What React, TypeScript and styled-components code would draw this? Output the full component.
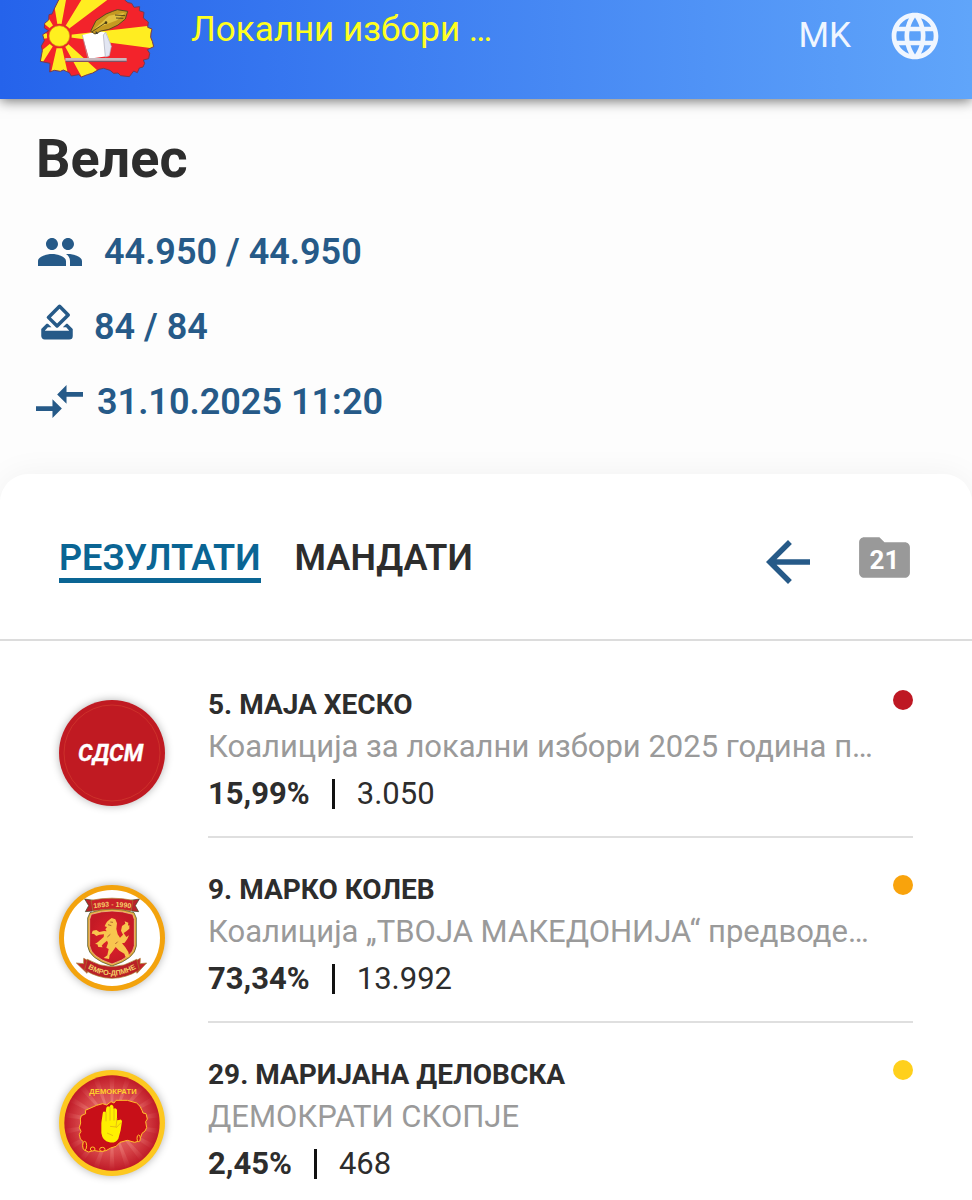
import React from "react";
import styled, { createGlobalStyle } from "styled-components";
import { MdArrowBack, MdFolder, MdHowToVote, MdLanguage, MdPeople } from "react-icons/md";

const GlobalStyle = createGlobalStyle`
  * { box-sizing: border-box; }
  body {
    margin: 0;
    background: #fdfdfd;
    color: #2d2d2d;
    font-family: Roboto, "Noto Sans", sans-serif;
  }
  h1, h2, p, ul { margin: 0; padding: 0; }
  button { border: 0; padding: 0; background: none; color: inherit; font: inherit; cursor: pointer; }
  svg { display: block; flex: none; }
`;

const Header = styled.header`
  position: relative;
  display: flex;
  align-items: flex-start;
  height: 99px;
  padding: 0 29px 0 38px;
  background: linear-gradient(90deg, #2563eb, #60a5fa);
  box-shadow: 0 2px 12px rgba(0, 0, 0, 0.55);
`;

const AppTitle = styled.p`
  flex: 1;
  padding: 10px 0 0 35px;
  color: #ffff1f;
  font-size: 35px;
  line-height: 40px;
`;

const Language = styled.button`
  display: flex;
  align-items: center;
  gap: 36px;
  padding-top: 8px;
  color: #f0f6ff;
  font-size: 35px;
  line-height: 56px;
`;

const Summary = styled.section`
  padding: 28px 36px 35px;
`;

const Place = styled.h1`
  font-size: 54px;
  font-weight: 700;
  line-height: 64px;
  margin-bottom: 23px;
`;

const Stat = styled.p<{ $gap: number }>`
  display: flex;
  align-items: center;
  gap: ${(p) => p.$gap}px;
  height: 75px;
  color: #265a88;
  font-size: 36px;
  font-weight: 600;
`;

const BallotIcon = styled(MdHowToVote)`
  margin-bottom: 10px;
`;

const Card = styled.main`
  background: #fff;
  border-radius: 28px 28px 0 0;
  box-shadow: 0 0 32px rgba(0, 0, 0, 0.05);
`;

const Toolbar = styled.div`
  display: flex;
  align-items: center;
  gap: 34px;
  height: 167px;
  padding: 0 57px 0 59px;
  border-bottom: 2px solid #dcdcdc;
`;

const Tab = styled.button<{ $active?: boolean }>`
  padding-top: 8px;
  border-bottom: 5px solid ${(p) => (p.$active ? "#0a6594" : "transparent")};
  color: ${(p) => (p.$active ? "#0a6594" : "#2d2d2d")};
  font-size: 36px;
  font-weight: 600;
  line-height: 40px;
`;

const Actions = styled.div`
  display: flex;
  align-items: flex-start;
  gap: 33px;
  margin-left: auto;
  padding-top: 10px;
  color: #265a88;
`;

const FolderButton = styled.button`
  display: grid;
  place-items: center;
  margin-top: -2px;
  color: #999;
  font-size: 26px;
  font-weight: 700;
  > * { grid-area: 1 / 1; }
  span { color: #fff; padding-top: 6px; }
`;

const List = styled.ul`
  list-style: none;
  padding: 12px 59px 0;
`;

const Row = styled.li`
  display: flex;
  gap: 43px;
`;

const Emblem = styled.div<{ $ring: string }>`
  flex: none;
  width: 106px;
  height: 106px;
  margin-top: 47px;
  border-radius: 50%;
  background: ${(p) => p.$ring};
  box-shadow: 0 0 8px rgba(0, 0, 0, 0.3);
  overflow: hidden;
`;

const Body = styled.div`
  flex: 1;
  min-width: 0;
  display: flex;
  justify-content: space-between;
  height: 185px;
  padding-top: 32px;
  border-bottom: 2px solid #dfdfdf;
  ${Row}:last-child & { border-bottom: 0; }
`;

const Candidate = styled.h2`
  font-size: 28px;
  font-weight: 700;
  line-height: 40px;
`;

const Party = styled.p`
  color: #9a9a9a;
  font-size: 31px;
  line-height: 44px;
  white-space: nowrap;
`;

const Votes = styled.p`
  display: flex;
  align-items: center;
  gap: 22px;
  font-size: 31px;
  line-height: 50px;
`;

const Bar = styled.span`
  width: 3px;
  height: 30px;
  background: #111;
`;

const Dot = styled.span<{ $color: string }>`
  flex: none;
  width: 20px;
  height: 20px;
  margin-top: 5px;
  border-radius: 50%;
  background: ${(p) => p.$color};
`;

function MapLogo() {
  return (
    <svg width="118" height="80" viewBox="114 0 354 240" aria-label="Лого">
      <defs>
        <clipPath id="map">
          <path d="M176 0L162 28 156 42 147 44 146 60 134 70 133 84 146 92 128 104 133 122 124 138 127 152 121 184 150 190 149 216 163 211 181 214 190 210 208 218 214 228 236 224 244 231 262 224 278 219 297 208 311 205 330 211 341 220 354 219 362 227 388 230 401 213 412 218 418 204 429 201 434 190 430 180 446 176 449 160 442 149 461 140 457 124 452 112 453 99 456 87 443 82 445 66 430 54 432 37 418 32 419 20 402 22 395 10 384 8 374 0Z" />
        </clipPath>
      </defs>
      <g clipPath="url(#map)">
        <path d="M100 0h380v240H100z" fill="#f3232b" />
        <g fill="#ffed21">
          <path d="M178 108L160 0h38zM178 108L250-10h85zM178 108L480 74v74zM178 108L250 240h74zM178 108L148 240h60zM178 108L110 216V164zM178 108L110 120V95zM178 108L126 66l16-18z" />
        </g>
        <circle cx="178" cy="108" r="37" fill="#e9252a" />
        <circle cx="178" cy="108" r="31" fill="#fff01f" stroke="#d98d18" strokeWidth="2" />
      </g>
      <path d="M176 0L162 28 156 42 147 44 146 60 134 70 133 84 146 92 128 104 133 122 124 138 127 152 121 184 150 190 149 216 163 211 181 214 190 210 208 218 214 228 236 224 244 231 262 224 278 219 297 208 311 205 330 211 341 220 354 219 362 227 388 230 401 213 412 218 418 204 429 201 434 190 430 180 446 176 449 160 442 149 461 140 457 124 452 112 453 99 456 87 443 82 445 66 430 54 432 37 418 32 419 20 402 22 395 10 384 8 374 0" fill="none" stroke="#703c55" strokeWidth="3" />
      <path d="M247 105l50-12 22 5 14 38-6 32-60 8z" fill="#fff" />
      <path d="M317 97l17 42-6 28-12 4-6-66z" fill="#e2e6f2" stroke="#a9aab8" strokeWidth="2" />
      <path d="M247 105l17 71" stroke="#a9aab8" strokeWidth="2" />
      <path d="M196 174h184v10H196z" fill="#c9b8bd" />
      <path d="M198 182h182v4H198z" fill="#815263" />
      <path d="M272 94l16-32 30-20 20-8 14-5 31 5-7 23-22 18-27 13-24 5-18 9z" fill="#c59a22" stroke="#594c1d" strokeWidth="3" />
      <path d="M283 87l44-40 48-9-24 23-37 14z" fill="#e1c040" />
      <path d="M275 96l42-28M345 45l31 2M348 54l22 1" stroke="#594c1d" strokeWidth="3" />
      <circle cx="318" cy="68" r="4" fill="#473b14" />
      <path d="M287 92l8 10-8-1z" fill="#333" />
    </svg>
  );
}

function CompareArrows() {
  return (
    <svg width="47" height="33" viewBox="2 5 20 14" fill="currentColor" aria-hidden="true">
      <path d="M9.01 14H2v2h7.01v3L13 15l-3.99-4v3zm5.98-1v-3H22V8h-7.01V5L11 9l3.99 4z" />
    </svg>
  );
}

function SdsmEmblem() {
  return (
    <svg width="106" height="106" viewBox="57 59 318 318">
      <circle cx="216" cy="218" r="144" fill="none" stroke="#d94a35" strokeWidth="1.5" />
      <text x="212" y="243" textAnchor="middle" fill="#fff" stroke="#fff" strokeWidth="1" fontFamily="Roboto, sans-serif" fontWeight="700" fontStyle="italic" fontSize="69">СДСМ</text>
    </svg>
  );
}

function VmroEmblem() {
  return (
    <svg width="106" height="106" viewBox="57 59 318 318">
      <defs>
        <path id="years" d="M150 131Q216 117 284 131" />
        <path id="motto" d="M134 303Q216 358 298 303" />
        <radialGradient id="shield"><stop stopColor="#e3222d" /><stop offset="1" stopColor="#c41a25" /></radialGradient>
      </defs>
      <circle cx="216" cy="218" r="144" fill="#fff" />
      <g stroke="#37451f" strokeWidth="2">
        <path d="M150 142q66-22 132 0l7 16v84q-4 38-73 60-69-22-73-60v-84z" fill="#e9ad3c" />
        <path d="M154 147q62-20 124 0l5 15v79q-4 34-67 55-63-21-67-55v-79z" fill="url(#shield)" stroke="#eed59c" />
        <path d="M134 101l26 4-3 32-21 2 10-18zM298 101l-26 4 3 32 21 2-10-18z" fill="#b9242a" />
        <path d="M153 105q63-13 126 0l-6 32q-57-12-114 0z" fill="#c92228" stroke="#a77b2a" />
        <path d="M131 279l22 12-12 33-32-31 22 2zM301 279l-22 12 12 33 29-31-20 2z" fill="#c3252a" stroke="#a77b2a" />
        <path d="M142 282q74 44 148 0l8 32q-82 50-164 0z" fill="#b92027" stroke="#a77b2a" />
      </g>
      <path d="M207 164l8-6 11 4 5 12-2 17 4 16 7 10 9-9-6-12 3-14 10-7-2-7 11 4-1 9 4-2v11l-9 8-8 5 8 12 8-5-5 11-8 11-8 2 10 12 9 14 3 14-11 2-4-11-15-9-11-11-10 14-8 10-2 12-16-3 11-8 4-19-7-4 5-14-3-7-11 9-5 6 3 5-13-1-3-8-7-1 9-6 17-15 1-8-14 1-9 4-7-6-7-1 3-9 11-2 9 6 14-3 8 1-4-6 5-7-7-2 3-7 4-7z" fill="#f8c64e" />
      <path d="M204 178l10 3m-3-11l8 1m-8 36l-9 8m31 14l-7 7" stroke="#8d3421" strokeWidth="2" />
      <text fill="#f5d16a" fontFamily='"Liberation Sans", sans-serif' fontWeight="700" fontSize="21"><textPath href="#years" startOffset="50%" textAnchor="middle">1893 - 1990</textPath></text>
      <text fill="#f5d16a" fontFamily='"Liberation Sans", sans-serif' fontWeight="700" fontSize="22"><textPath href="#motto" startOffset="50%" textAnchor="middle">ВМРО-ДПМНЕ</textPath></text>
    </svg>
  );
}

function DemokratiEmblem() {
  const rays = Array.from({ length: 18 }, (_, i) => i * 20);
  return (
    <svg width="106" height="106" viewBox="57 59 318 318">
      <defs>
        <radialGradient id="glow"><stop stopColor="#ed8a80" /><stop offset="0.65" stopColor="#d8484b" /><stop offset="1" stopColor="#bf1b28" /></radialGradient>
        <radialGradient id="ray" gradientUnits="userSpaceOnUse" cx="216" cy="218" r="144"><stop stopColor="#ffb5a8" /><stop offset="1" stopColor="#ffb5a8" stopOpacity="0" /></radialGradient>
      </defs>
      <circle cx="216" cy="218" r="143" fill="url(#glow)" />
      <g fill="url(#ray)" opacity="0.6">
        {rays.map((r) => <path key={r} d="M216 218L208 75h16z" transform={`rotate(${r} 216 218)`} />)}
      </g>
      <path d="M121 206L124 196 137 190 136 180 170 165 188 160 200 164 213 154 222 158 228 150 262 150 290 158 300 168 306 180 309 188 318 190 322 206 317 214 320 232 315 242 306 249 303 258 297 272 284 276 262 270 240 276 228 288 212 293 198 301 176 303 160 300 146 305 133 299 128 286 130 274 121 266 118 252 123 243 118 232 122 218z" fill="#c80f18" stroke="#ffc02b" strokeWidth="3" strokeLinejoin="round" />
      <g fill="#c80f18" stroke="#ffc02b" strokeWidth="3"><ellipse cx="134" cy="286" rx="6" ry="13" /><ellipse cx="158" cy="296" rx="7" ry="6" /><ellipse cx="187" cy="297" rx="8" ry="6" /><ellipse cx="296" cy="264" rx="5" ry="10" /></g>
      <path d="M188 190q1-8 6-6l3 2 2-14q4-8 9-2l2-4q6-7 10 2l1 8q5-6 10 2v32l6-1q7-5 9 4l-4 27-7 25q-9 15-27 11-20-3-24-28v-30z" fill="#fff000" />
      <path d="M198 184v29m12-43v41m12-36v36m9-8l-3 27-18-2m18 5l15-16m-42 31l18 8" fill="none" stroke="#d9a819" strokeWidth="2" />
      <text x="219" y="130" textAnchor="middle" fill="#ffd12c" fontFamily='"Liberation Sans", sans-serif' fontWeight="700" fontSize="23">ДЕМОКРАТИ</text>
    </svg>
  );
}

const results = [
  { name: "5. МАЈА ХЕСКО", party: "Коалиција за локални избори 2025 година п…", share: "15,99%", votes: "3.050", color: "#be1823", ring: "#c01a22", emblem: <SdsmEmblem /> },
  { name: "9. МАРКО КОЛЕВ", party: "Коалиција „ТВОЈА МАКЕДОНИЈА“ предводе…", share: "73,34%", votes: "13.992", color: "#f9a30c", ring: "#f3a30d", emblem: <VmroEmblem /> },
  { name: "29. МАРИЈАНА ДЕЛОВСКА", party: "ДЕМОКРАТИ СКОПЈЕ", share: "2,45%", votes: "468", color: "#ffd01c", ring: "#fdc820", emblem: <DemokratiEmblem /> },
];

export default function App() {
  return (
    <>
      <GlobalStyle />
      <Header>
        <MapLogo />
        <AppTitle>Локални избори …</AppTitle>
        <Language>
          MK
          <MdLanguage size={56} />
        </Language>
      </Header>
      <Summary>
        <Place>Велес</Place>
        <Stat $gap={20}><MdPeople size={48} />44.950 / 44.950</Stat>
        <Stat $gap={16}><BallotIcon size={42} />84 / 84</Stat>
        <Stat $gap={14}><CompareArrows />31.10.2025 11:20</Stat>
      </Summary>
      <Card>
        <Toolbar>
          <Tab $active>РЕЗУЛТАТИ</Tab>
          <Tab>МАНДАТИ</Tab>
          <Actions>
            <button aria-label="Назад"><MdArrowBack size={66} /></button>
            <FolderButton><MdFolder size={61} /><span>21</span></FolderButton>
          </Actions>
        </Toolbar>
        <List>
          {results.map((r) => (
            <Row key={r.name}>
              <Emblem $ring={r.ring}>{r.emblem}</Emblem>
              <Body>
                <div>
                  <Candidate>{r.name}</Candidate>
                  <Party>{r.party}</Party>
                  <Votes><b>{r.share}</b><Bar /><span>{r.votes}</span></Votes>
                </div>
                <Dot $color={r.color} />
              </Body>
            </Row>
          ))}
        </List>
      </Card>
    </>
  );
}
